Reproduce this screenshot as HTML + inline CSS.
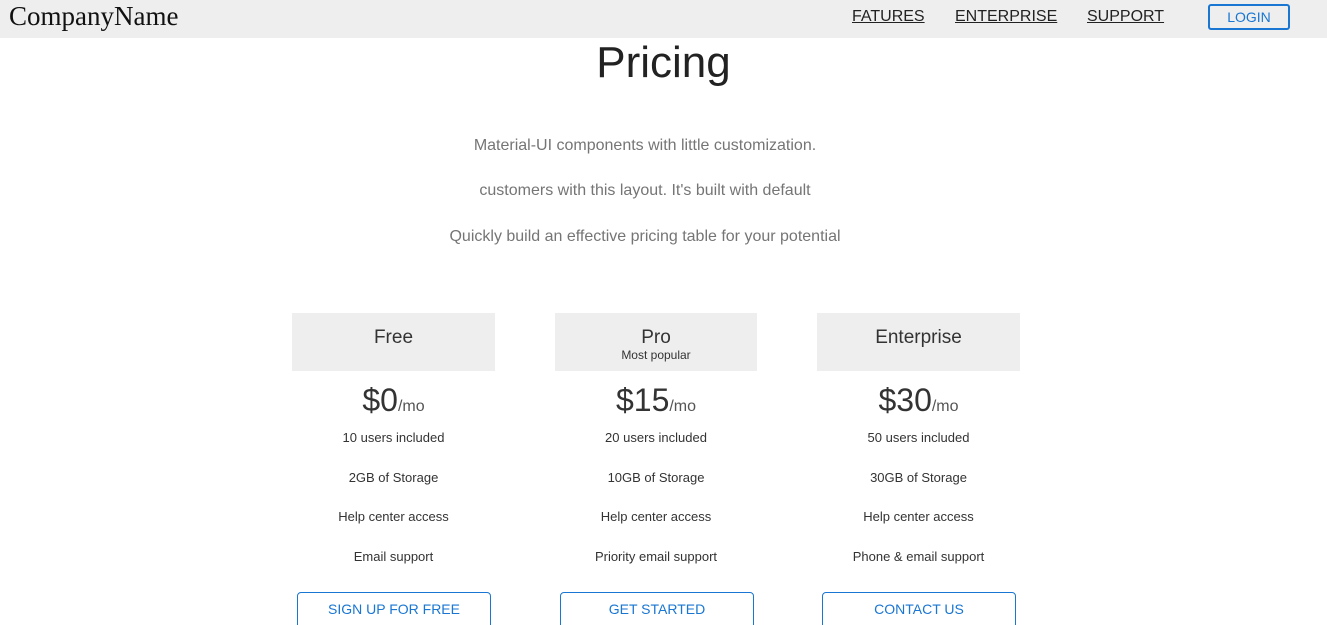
<!DOCTYPE html>
<html><head><meta charset="utf-8"><style>
*{margin:0;padding:0;box-sizing:border-box}
html,body{width:1327px;height:625px;overflow:hidden}
body{background:#fff;font-family:"Liberation Sans",sans-serif;position:relative;color:#333}
.nav{position:absolute;left:0;top:0;width:1327px;height:38px;background:#eee}
.logo{position:absolute;left:9px;top:1px;font-family:"Liberation Serif",serif;font-size:27px;color:#111}
.nl{position:absolute;top:8px;font-size:16px;color:#222;text-decoration:underline}
.login{position:absolute;left:1208px;top:4px;width:82px;height:26px;border:2px solid #1976d2;border-radius:3px;color:#1976d2;font-size:14px;text-align:center;line-height:22px}
.title{position:absolute;left:0;width:1327px;top:38px;text-align:center;font-size:44px;font-weight:300;color:#222}
.sub{position:absolute;left:0;width:1290px;text-align:center;font-size:16px;color:#757575}
.card{position:absolute;top:313px;width:203px;height:312px}
.hd{position:absolute;left:0;top:0;width:100%;height:58px;background:#eee;text-align:center;font-size:19px;color:#333;padding-top:14px}
.hd small{display:block;font-size:12px;margin-top:-1px}
.price{position:absolute;left:0;width:100%;top:69px;text-align:center;font-size:32px;color:#333}
.price span{font-size:16px;color:#555}
.fs{position:absolute;left:0;width:100%;top:117px}
.f{text-align:center;font-size:13px;color:#333;height:39.7px;line-height:16px}
.btn{position:absolute;top:279px;left:5px;width:194px;height:40px;border:1px solid #1976d2;border-radius:4px;color:#1976d2;text-align:center;font-size:14px;line-height:32px}
</style></head><body>
<div class="nav"><div class="logo">CompanyName</div>
<span class="nl" style="left:852px">FATURES</span>
<span class="nl" style="left:955px">ENTERPRISE</span>
<span class="nl" style="left:1087px">SUPPORT</span>
<div class="login">LOGIN</div></div>
<div class="title">Pricing</div>
<div class="sub" style="top:137px">Material-UI components with little customization.</div>
<div class="sub" style="top:182px">customers with this layout. It's built with default</div>
<div class="sub" style="top:228px">Quickly build an effective pricing table for your potential</div>

<div class="card" style="left:292px"><div class="hd">Free</div>
<div class="price">$0<span>/mo</span></div>
<div class="fs"><div class="f">10 users included</div><div class="f">2GB of Storage</div><div class="f">Help center access</div><div class="f">Email support</div></div>
<div class="btn">SIGN UP FOR FREE</div></div>

<div class="card" style="left:555px;width:202px"><div class="hd">Pro<small>Most popular</small></div>
<div class="price">$15<span>/mo</span></div>
<div class="fs"><div class="f">20 users included</div><div class="f">10GB of Storage</div><div class="f">Help center access</div><div class="f">Priority email support</div></div>
<div class="btn">GET STARTED</div></div>

<div class="card" style="left:817px"><div class="hd">Enterprise</div>
<div class="price">$30<span>/mo</span></div>
<div class="fs"><div class="f">50 users included</div><div class="f">30GB of Storage</div><div class="f">Help center access</div><div class="f">Phone &amp; email support</div></div>
<div class="btn">CONTACT US</div></div>
</body></html>
